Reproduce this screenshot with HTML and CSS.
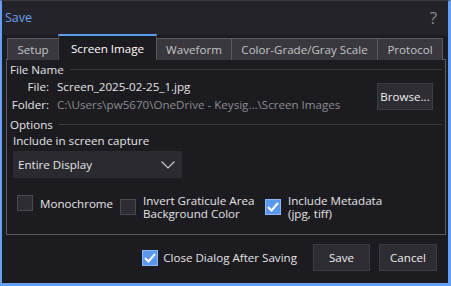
FILE: index.html
```html
<!DOCTYPE html>
<html lang="en">
<head>
  <meta charset="UTF-8">
  <title>Save</title>
  <link rel="stylesheet" href="styles.css">
</head>
<body>
  <div class="dialog">
    <div class="titlebar">
      <span class="title">Save</span>
      <span class="help">?</span>
    </div>

    <div class="tabs">
      <div class="tab tab-setup">Setup</div>
      <div class="tab tab-screen active">Screen Image</div>
      <div class="tab tab-wave">Waveform</div>
      <div class="tab tab-color">Color-Grade/Gray Scale</div>
      <div class="tab tab-proto">Protocol</div>
    </div>

    <div class="panel">
      <div class="section-head"><span>File Name</span></div>
      <div class="file-grid">
        <span class="lbl">File:</span>
        <span class="val">Screen_2025-02-25_1.jpg</span>
        <button class="btn browse">Browse...</button>
        <span class="lbl">Folder:</span>
        <span class="val dim">C:\Users\pw5670\OneDrive - Keysig...\Screen Images</span>
      </div>

      <div class="section-head options-head"><span>Options</span></div>
      <div class="include">Include in screen capture</div>
      <div class="select">
        <span>Entire Display</span>
        <svg width="14" height="8" viewBox="0 0 14 8"><polyline points="0.5,0.5 7,7 13.5,0.5" fill="none" stroke="#c9c9cc" stroke-width="1.2"/></svg>
      </div>

      <div class="checks">
        <label class="check check-mono"><span class="box"></span><span>Monochrome</span></label>
        <label class="check check-invert"><span class="box"></span><span>Invert Graticule Area<br>Background Color</span></label>
        <label class="check"><span class="box on"><svg width="12" height="10" viewBox="0 0 12 10"><polyline points="1,5 4.5,8.5 11,1" fill="none" stroke="#fff" stroke-width="2"/></svg></span><span>Include Metadata<br>(jpg, tiff)</span></label>
      </div>
    </div>

    <div class="footer">
      <label class="check"><span class="box on"><svg width="12" height="10" viewBox="0 0 12 10"><polyline points="1,5 4.5,8.5 11,1" fill="none" stroke="#fff" stroke-width="2"/></svg></span><span>Close Dialog After Saving</span></label>
      <button class="btn save">Save</button>
      <button class="btn cancel">Cancel</button>
    </div>
  </div>
</body>
</html>
```

FILE: styles.css
```css
body {
  margin: 0;
  background: #1c1b20;
  font-family: "Open Sans", "Noto Sans", sans-serif;
  font-size: 11.6px;
  color: #e4e4e6;
}

.dialog {
  width: 451px;
  height: 286px;
  box-sizing: border-box;
  background: #1c1b20;
  border: 2px solid #64a0f4;
  border-top: 1px solid #3a3a40;
  border-right-width: 3px;
  border-bottom-width: 3px;
  display: flex;
  flex-direction: column;
}

.titlebar {
  height: 34px;
  flex: none;
  display: flex;
  align-items: center;
  justify-content: space-between;
  padding: 0 11px 0 3px;
  background: #242329;
}

.title {
  color: #6b9ff0;
  font-size: 12.5px;
  margin-top: -1px;
}

.help {
  color: #8a8a8e;
  font-size: 17px;
  margin-top: -2px;
}

.tabs {
  display: flex;
  align-items: flex-end;
  height: 25px;
  margin-left: 5px;
  margin-bottom: -1px;
  position: relative;
  z-index: 1;
}

.tab {
  height: 22px;
  box-sizing: border-box;
  display: flex;
  align-items: center;
  justify-content: center;
  background: #39383e;
  border: 1px solid #5a5a5e;
  border-bottom: none;
  color: #c4c4c8;
  margin-left: -1px;
}

.tab.active {
  height: 26px;
  background: #1c1b20;
  border-color: #4a4a4e;
  border-top: 2px solid #5b9bf0;
  color: #ffffff;
}

.tab-setup { width: 52px; margin-left: 0; }
.tab-screen { width: 99px; }
.tab-wave { width: 76px; }
.tab-color { width: 147px; }
.tab-proto { width: 66px; }

.panel {
  margin-left: 4px;
  width: 440px;
  height: 176px;
  box-sizing: border-box;
  border: 1px solid #5c5c60;
  padding: 0 2px;
  flex: none;
}

.section-head {
  display: flex;
  align-items: center;
  gap: 6px;
  height: 18px;
  padding-left: 1px;
}

.section-head::after {
  content: "";
  flex: 1;
  height: 1px;
  background: #3a3a3f;
  margin-right: 1px;
}

.file-grid {
  display: grid;
  grid-template-columns: 40px 1fr auto;
  grid-template-rows: 17px 18px;
  column-gap: 8px;
  align-items: center;
}

.lbl {
  text-align: right;
}

.val.dim {
  color: #8c8c90;
}

.browse {
  grid-row: 1 / 3;
  grid-column: 3;
  width: 56px;
  height: 27px;
  margin-right: 10px;
  margin-top: 2px;
}

.btn {
  background: #2d2c32;
  border: 1px solid #3d3c42;
  color: #eeeeee;
  font-family: inherit;
  font-size: 11.6px;
  padding: 0;
}

.options-head {
  margin-top: 2px;
}

.include {
  height: 16px;
  line-height: 16px;
  padding-left: 4px;
}

.select {
  margin: 2px 0 0 4px;
  width: 169px;
  height: 27px;
  box-sizing: border-box;
  background: #2b2a30;
  display: flex;
  align-items: center;
  justify-content: space-between;
  padding: 0 7px 0 5px;
}

.checks {
  display: flex;
  align-items: flex-start;
  margin: 16px 0 0 8px;
}

.check {
  display: flex;
  align-items: center;
  gap: 7px;
  line-height: 13px;
}

.check-mono {
  width: 103px;
}

.check-invert {
  width: 145px;
}

.checks .check-mono {
  margin-top: 1px;
}

.box {
  width: 16px;
  height: 16px;
  box-sizing: border-box;
  flex: none;
  background: #2e2d33;
  border: 1px solid #4b4a50;
  display: flex;
  align-items: center;
  justify-content: center;
}

.box.on {
  background: #5a98f0;
  border-color: #8cb8f4;
}

.footer {
  flex: 1;
  display: flex;
  align-items: center;
  justify-content: flex-end;
  padding: 0 11px 3px 0;
}

.footer .check {
  gap: 5px;
  margin-right: 16px;
}

.save {
  width: 57px;
  height: 27px;
}

.cancel {
  width: 58px;
  height: 27px;
  margin-left: 9px;
}
```
